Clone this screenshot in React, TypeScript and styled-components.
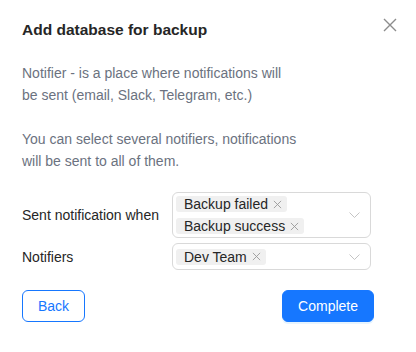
import React from "react";
import styled, { createGlobalStyle } from "styled-components";

const GlobalStyle = createGlobalStyle`
  html, body {
    margin: 0;
    padding: 0;
    background: #ffffff;
  }
  body {
    font-family: "Liberation Sans", Arial, sans-serif;
    color: rgba(0, 0, 0, 0.88);
  }
`;

const Modal = styled.div`
  position: relative;
  width: 416px;
  height: 352px;
  box-sizing: border-box;
  padding: 18px 42px 0 22px;
  background: #fff;
`;

const Title = styled.div`
  font-size: 15.5px;
  line-height: 24px;
  font-weight: 700;
  color: #262626;
`;

const CloseButton = styled.button`
  position: absolute;
  top: 16px;
  right: 17px;
  width: 18px;
  height: 18px;
  padding: 0;
  border: none;
  background: transparent;
  display: flex;
  align-items: center;
  justify-content: center;
  cursor: pointer;
`;

const Description = styled.p`
  margin: 20px 0 0;
  font-size: 14px;
  line-height: 22px;
  color: #6b7280;
`;

const Form = styled.div`
  margin-top: 20px;
  display: flex;
  flex-direction: column;
  gap: 5px;
`;

const Row = styled.div`
  display: grid;
  grid-template-columns: 150px 199px;
  align-items: center;
`;

const Label = styled.div`
  font-size: 14px;
  color: #262626;
`;

const SelectBox = styled.div`
  position: relative;
  box-sizing: border-box;
  min-height: 27px;
  border: 1px solid #d9d9d9;
  border-radius: 6px;
  padding: 0 28px 0 3px;
  display: flex;
  flex-wrap: wrap;
  align-items: center;
  align-content: center;
  column-gap: 4px;
`;

const Tag = styled.span`
  display: inline-flex;
  align-items: center;
  height: 16px;
  margin: 3px 0;
  padding: 0 5px 0 8px;
  background: #f0f0f0;
  border-radius: 3px;
  font-size: 14px;
  color: #262626;
  white-space: nowrap;
`;

const TagClose = styled.span`
  display: inline-flex;
  margin-left: 5px;
`;

const Chevron = styled.span`
  position: absolute;
  right: 10px;
  top: 50%;
  transform: translateY(-50%);
  display: flex;
`;

const Footer = styled.div`
  margin-top: 20px;
  display: flex;
  justify-content: space-between;
`;

const Button = styled.button<{ $primary?: boolean }>`
  height: 32px;
  box-sizing: border-box;
  padding: 0 15px;
  border-radius: 6px;
  font-family: inherit;
  font-size: 14px;
  cursor: pointer;
  border: 1px solid #1677ff;
  background: ${({ $primary }) => ($primary ? "#1677ff" : "#fff")};
  color: ${({ $primary }) => ($primary ? "#fff" : "#1677ff")};
  box-shadow: ${({ $primary }) =>
    $primary ? "0 2px 0 rgba(5, 145, 255, 0.1)" : "none"};
`;

const SmallX = () => (
  <svg width="9" height="9" viewBox="0 0 10 10">
    <path d="M1 1 L9 9 M9 1 L1 9" stroke="#999" strokeWidth="1" fill="none" />
  </svg>
);

const ChevronDown = () => (
  <svg width="11" height="6" viewBox="0 0 11 6">
    <path d="M0.5 0.5 L5.5 5.5 L10.5 0.5" stroke="#c4c4c4" strokeWidth="1" fill="none" />
  </svg>
);

const MultiSelect = ({ values }: { values: string[] }) => (
  <SelectBox>
    {values.map((v) => (
      <Tag key={v}>
        {v}
        <TagClose>
          <SmallX />
        </TagClose>
      </Tag>
    ))}
    <Chevron>
      <ChevronDown />
    </Chevron>
  </SelectBox>
);

export default function App() {
  return (
    <>
      <GlobalStyle />
      <Modal>
        <Title>Add database for backup</Title>
        <CloseButton aria-label="Close">
          <svg width="14" height="14" viewBox="0 0 14 14">
            <path d="M1 1 L13 13 M13 1 L1 13" stroke="#8c8c8c" strokeWidth="1.4" fill="none" />
          </svg>
        </CloseButton>

        <Description>
          Notifier - is a place where notifications will
          <br />
          be sent (email, Slack, Telegram, etc.)
          <br />
          <br />
          You can select several notifiers, notifications
          <br />
          will be sent to all of them.
        </Description>

        <Form>
          <Row>
            <Label>Sent notification when</Label>
            <MultiSelect values={["Backup failed", "Backup success"]} />
          </Row>
          <Row>
            <Label>Notifiers</Label>
            <MultiSelect values={["Dev Team"]} />
          </Row>
        </Form>

        <Footer>
          <Button>Back</Button>
          <Button $primary>Complete</Button>
        </Footer>
      </Modal>
    </>
  );
}
